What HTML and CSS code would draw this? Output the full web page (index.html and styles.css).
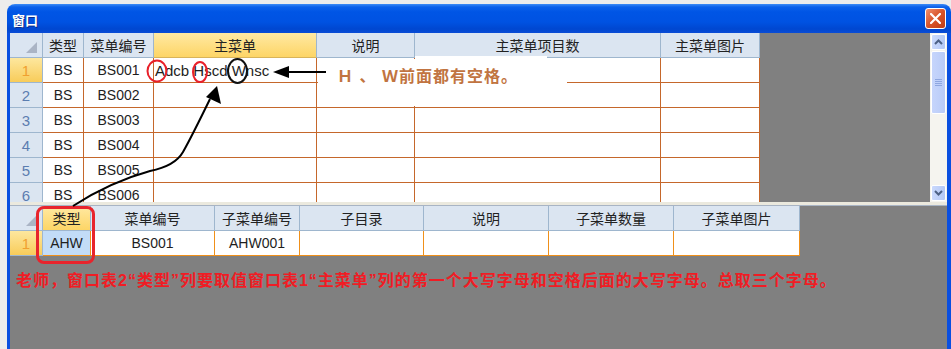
FILE: index.html
```html
<!DOCTYPE html>
<html lang="zh">
<head>
    <meta charset="UTF-8">
    <title>窗口</title>
    <link rel="stylesheet" href="styles.css">
</head>
<body>
<div class="screen">
    <div class="window">
        <div class="titlebar">
            <span class="title">窗口</span>
            <span class="close">
                <svg width="11" height="11" viewBox="0 0 11 11"><path d="M1 1 L10 10 M10 1 L1 10" stroke="#fff" stroke-width="2.2" stroke-linecap="round"/></svg>
            </span>
        </div>
        <div class="client">
            <div class="pane-top">
                <div class="grid grid-main">
                    <div class="row head">
                        <div class="cell corner"><span class="tri"></span></div>
                        <div class="cell">类型</div>
                        <div class="cell">菜单编号</div>
                        <div class="cell sel">主菜单</div>
                        <div class="cell">说明</div>
                        <div class="cell">主菜单项目数</div>
                        <div class="cell">主菜单图片</div>
                    </div>
                    <div class="row">
                        <div class="cell rh cur">1</div>
                        <div class="cell">BS</div>
                        <div class="cell">BS001</div>
                        <div class="cell left menu-text">Adcb Hscd Wnsc</div>
                        <div class="cell"></div>
                        <div class="cell"></div>
                        <div class="cell"></div>
                    </div>
                    <div class="row">
                        <div class="cell rh">2</div>
                        <div class="cell">BS</div>
                        <div class="cell">BS002</div>
                        <div class="cell"></div>
                        <div class="cell"></div>
                        <div class="cell"></div>
                        <div class="cell"></div>
                    </div>
                    <div class="row">
                        <div class="cell rh">3</div>
                        <div class="cell">BS</div>
                        <div class="cell">BS003</div>
                        <div class="cell"></div>
                        <div class="cell"></div>
                        <div class="cell"></div>
                        <div class="cell"></div>
                    </div>
                    <div class="row">
                        <div class="cell rh">4</div>
                        <div class="cell">BS</div>
                        <div class="cell">BS004</div>
                        <div class="cell"></div>
                        <div class="cell"></div>
                        <div class="cell"></div>
                        <div class="cell"></div>
                    </div>
                    <div class="row">
                        <div class="cell rh">5</div>
                        <div class="cell">BS</div>
                        <div class="cell">BS005</div>
                        <div class="cell"></div>
                        <div class="cell"></div>
                        <div class="cell"></div>
                        <div class="cell"></div>
                    </div>
                    <div class="row">
                        <div class="cell rh">6</div>
                        <div class="cell">BS</div>
                        <div class="cell">BS006</div>
                        <div class="cell"></div>
                        <div class="cell"></div>
                        <div class="cell"></div>
                        <div class="cell"></div>
                    </div>
                </div>
                <div class="vscroll">
                    <div class="sb-btn">
                        <svg width="9" height="6" viewBox="0 0 9 6"><path d="M1 5 L4.5 1.5 L8 5" fill="none" stroke="#4d6185" stroke-width="2"/></svg>
                    </div>
                    <div class="sb-thumb">
                        <span class="grip"></span>
                    </div>
                    <div class="sb-track"></div>
                    <div class="sb-btn">
                        <svg width="9" height="6" viewBox="0 0 9 6"><path d="M1 1 L4.5 4.5 L8 1" fill="none" stroke="#4d6185" stroke-width="2"/></svg>
                    </div>
                </div>
            </div>
            <div class="splitter"></div>
            <div class="pane-bottom">
                <div class="grid grid-sub">
                    <div class="row head">
                        <div class="cell corner"><span class="tri"></span></div>
                        <div class="cell sel">类型</div>
                        <div class="cell">菜单编号</div>
                        <div class="cell">子菜单编号</div>
                        <div class="cell">子目录</div>
                        <div class="cell">说明</div>
                        <div class="cell">子菜单数量</div>
                        <div class="cell">子菜单图片</div>
                    </div>
                    <div class="row">
                        <div class="cell rh cur">1</div>
                        <div class="cell picked">AHW</div>
                        <div class="cell">BS001</div>
                        <div class="cell">AHW001</div>
                        <div class="cell"></div>
                        <div class="cell"></div>
                        <div class="cell"></div>
                        <div class="cell"></div>
                    </div>
                </div>
                <p class="note">老师，窗口表2“类型”列要取值窗口表1“主菜单”列的第一个大写字母和空格后面的大写字母。总取三个字母。</p>
            </div>
        </div>
    </div>

    <!-- annotations drawn over the screenshot -->
    <div class="blob"></div>
    <div class="hint">Ｈ 、 Ｗ前面都有空格。</div>
    <div class="redbox"></div>
    <svg class="marks" width="951" height="349" viewBox="0 0 951 349">
        <ellipse cx="157" cy="71" rx="9.5" ry="10.5" fill="none" stroke="#e8202a" stroke-width="2"/>
        <ellipse cx="200" cy="72" rx="7" ry="10" fill="none" stroke="#e8202a" stroke-width="2"/>
        <ellipse cx="237.5" cy="71" rx="9.5" ry="12" fill="none" stroke="#111" stroke-width="2"/>
        <line x1="287" y1="72" x2="326" y2="72" stroke="#000" stroke-width="2"/>
        <polygon points="273,72 289,66 289,78" fill="#000"/>
        <path d="M73 206 Q110 182 150 171 Q175 166 183 152 Q192 136 210 99" fill="none" stroke="#000" stroke-width="2"/>
        <polygon points="217,86 206,97 221,104" fill="#000"/>
    </svg>
</div>
</body>
</html>
```

FILE: styles.css
```css
body {
    margin: 0;
    background-color: #ececec;
    font-family: "Liberation Sans", "Noto Sans CJK SC", sans-serif;
}
.screen {
    position: relative;
    width: 951px;
    height: 349px;
    overflow: hidden;
}
.window {
    margin: 4px 0 0 7px;
    width: 944px;
    border-radius: 8px 8px 0 0;
    overflow: hidden;
}
.titlebar {
    height: 29px;
    display: flex;
    align-items: center;
    justify-content: space-between;
    padding: 0 5px 0 5px;
    background: linear-gradient(to bottom, #3d8cf6 0, #0b60ea 3px, #0055e5 8px, #0052e2 18px, #0047d0 25px, #0a4cd6 29px);
}
.title {
    color: #fff;
    font-size: 13px;
    font-weight: bold;
    text-shadow: 1px 1px 0 #0a2a8a;
    padding-top: 1px;
}
.close {
    width: 21px;
    height: 21px;
    box-sizing: border-box;
    border: 1px solid #fff;
    border-radius: 3px;
    background: linear-gradient(135deg, #f09070, #d8542a 50%, #c03c14);
    display: flex;
    align-items: center;
    justify-content: center;
}
.client {
    height: 316px;
    background-color: #808080;
    border-left: 3px solid #0a4fe0;
    border-right: 4px solid #0a4fe0;
}
.pane-top {
    display: flex;
    height: 169px;
}
.grid-main {
    flex: 1;
    overflow: hidden;
}
.row {
    display: flex;
    height: 25px;
}
.cell {
    box-sizing: border-box;
    flex: none;
    display: flex;
    align-items: center;
    justify-content: center;
    border-right: 1px solid #c5672b;
    border-bottom: 1px solid #c5672b;
    background-color: #fff;
    color: #1e1e1e;
    font-size: 14px;
    white-space: nowrap;
    overflow: hidden;
}
.head .cell {
    background-color: #dbe5f1;
    border-color: #9eb6ce;
    color: #222;
}
.head .cell.sel {
    background: linear-gradient(to bottom, #ffe9a3, #fdd566);
    border-bottom-color: #d8b45a;
}
.corner {
    align-items: flex-end;
    justify-content: flex-end;
    padding: 0 5px 4px 0;
}
.tri {
    width: 0;
    height: 0;
    border-left: 11px solid transparent;
    border-bottom: 11px solid #aab4c5;
}
.cell.rh {
    background-color: #dbe5f1;
    border-color: #9eb6ce;
    color: #5b7db0;
    font-size: 15px;
}
.cell.rh.cur {
    background: linear-gradient(to bottom, #fde79e, #f8cc5a);
    color: #f0a030;
}
.cell.left {
    justify-content: flex-start;
    padding-left: 1px;
}
.menu-text {
    font-size: 15px;
}
.grid-main .cell:nth-child(1) { width: 33px; }
.grid-main .cell:nth-child(2) { width: 41px; }
.grid-main .cell:nth-child(3) { width: 70px; }
.grid-main .cell:nth-child(4) { width: 163px; }
.grid-main .cell:nth-child(5) { width: 98px; }
.grid-main .cell:nth-child(6) { width: 246px; }
.grid-main .cell:nth-child(7) { width: 99px; }

.vscroll {
    width: 17px;
    box-sizing: border-box;
    padding: 1px 1px 1px 1px;
    background-color: #f5f4ef;
    display: flex;
    flex-direction: column;
}
.sb-btn {
    height: 16px;
    box-sizing: border-box;
    border: 1px solid #fff;
    border-radius: 2px;
    background: linear-gradient(to right, #cad9fd, #b4c8f5);
    display: flex;
    align-items: center;
    justify-content: center;
}
.sb-thumb {
    height: 63px;
    margin-top: 1px;
    box-sizing: border-box;
    border: 1px solid #fff;
    border-radius: 2px;
    background: linear-gradient(to right, #c6d5fc, #b9cbf7);
    display: flex;
    align-items: center;
    justify-content: center;
}
.grip {
    width: 7px;
    height: 7px;
    background: repeating-linear-gradient(to bottom, #8ea6e0 0, #8ea6e0 1px, transparent 1px, transparent 2px);
}
.sb-track {
    flex: 1;
}
.splitter {
    height: 3px;
    background-color: #ebe9de;
    border-bottom: 1px solid #a8b4c4;
}
.grid-sub .cell {
    border-color: #f0901a;
}
.grid-sub .cell:nth-child(1) { width: 33px; }
.grid-sub .cell:nth-child(2) { width: 48px; }
.grid-sub .cell:nth-child(3) { width: 124px; }
.grid-sub .cell:nth-child(4) { width: 85px; }
.grid-sub .cell:nth-child(5) { width: 124px; }
.grid-sub .cell:nth-child(6) { width: 125px; }
.grid-sub .cell:nth-child(7) { width: 125px; }
.grid-sub .cell:nth-child(8) { width: 126px; }
.grid-sub .head .cell {
    border-color: #9eb6ce;
}
.grid-sub .cell.rh {
    border-color: #9eb6ce;
}
.cell.picked {
    background-color: #c2dcf7;
}
.note {
    margin: 0;
    padding: 15px 0 0 6px;
    line-height: 20px;
    font-size: 16px;
    font-weight: bold;
    letter-spacing: 1px;
    color: #f01c24;
    white-space: nowrap;
}

.blob {
    position: absolute;
    left: 318px;
    top: 59px;
    width: 249px;
    height: 47px;
    background-color: #fff;
}
.blob::before {
    content: "";
    position: absolute;
    left: 97px;
    top: -3px;
    width: 132px;
    height: 4px;
    background-color: #fff;
}
.hint {
    position: absolute;
    left: 337px;
    top: 68px;
    line-height: 18px;
    font-size: 16px;
    font-weight: bold;
    letter-spacing: 1px;
    color: #c17441;
    white-space: nowrap;
}
.redbox {
    position: absolute;
    left: 36px;
    top: 206px;
    width: 59px;
    height: 58px;
    box-sizing: border-box;
    border: 3px solid #e8242c;
    border-radius: 8px;
}
.marks {
    position: absolute;
    left: 0;
    top: 0;
}
```
